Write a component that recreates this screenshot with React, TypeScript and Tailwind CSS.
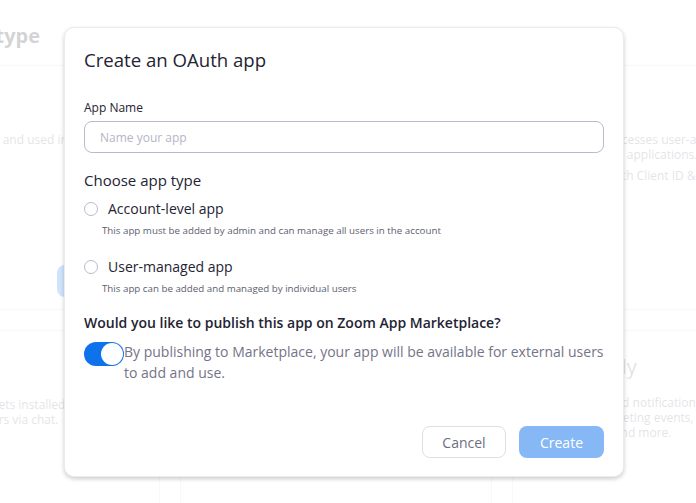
const Card = ({ children, className = "" }: { children?: React.ReactNode; className?: string }) => (
  <div className={`h-[245px] border border-[#dcdce3] rounded-[6px] relative ${className}`}>{children}</div>
);

const Radio = ({ label }: { label: string }) => (
  <label className="flex items-center h-5">
    <span className="w-[14px] h-[14px] rounded-full border border-[#babacc] bg-white" />
    <span className="ml-[10px] text-[14px] leading-5 text-[#232333]">{label}</span>
  </label>
);

export default function App() {
  return (
    <div className="relative w-[696px] h-[503px] overflow-hidden bg-white font-['Open_Sans',sans-serif]">
      {/* page behind the dialog */}
      <div className="-ml-[152px] w-[1000px]">
        <div className="h-[65px] pt-[22px]">
          <div className="w-[192px] flex justify-end">
            <h1 className="text-[20px] leading-[28px] font-bold text-[#232333] whitespace-nowrap">Choose app type</h1>
          </div>
        </div>
        <div className="grid grid-cols-[312px_312px_312px] gap-5">
          <Card>
            <p className="pt-[66px] pl-[29px] text-[12px] leading-[15px] text-[#747487] whitespace-nowrap">
              An app to be installed and used in the account
            </p>
            <button className="mt-[118px] ml-[208px] w-[120px] h-8 rounded-lg bg-[#0e72ed] text-white text-[14px]">
              Create
            </button>
          </Card>
          <Card />
          <Card>
            <div className="pt-[66px] pl-[22px] text-[12px] leading-[15px] text-[#747487] whitespace-nowrap">
              <p className="ml-[6px]">An app that accesses user-authorized data</p>
              <p className="ml-[18px]">for 3rd party applications.</p>
              <p className="mt-[6px]">Authenticate with Client ID &amp; Secret</p>
            </div>
          </Card>
          <Card>
            <div className="pt-[66px] pl-[36px] text-[12px] leading-[15px] text-[#747487] whitespace-nowrap">
              <p>A chatbot app that gets installed</p>
              <p className="ml-[6px]">to interact with users via chat.</p>
            </div>
          </Card>
          <Card />
          <Card>
            <div className="pt-[22px] pl-[24px] whitespace-nowrap">
              <p className="text-[20px] leading-[28px] text-[#747487]">Event Only</p>
              <div className="mt-[14px] text-[12px] leading-[15px] text-[#747487]">
                <p>Event hooks and notifications for</p>
                <p>updates for meeting events, webinar</p>
                <p className="ml-[6px]">user events, and more.</p>
              </div>
            </div>
          </Card>
        </div>
      </div>

      {/* dim layer */}
      <div className="absolute inset-0 bg-white/80" />

      {/* dialog */}
      <div className="absolute left-[64px] top-[27px] w-[560px] h-[450px] bg-white rounded-[10px] border border-[#ebebee] shadow-[0_2px_4px_rgba(0,0,0,0.2)] px-[19px] pt-[18px] pb-[18px] flex flex-col">
        <h2 className="text-[18.6px] leading-[27px] font-medium text-[#232333]">Create an OAuth app</h2>

        <label className="mt-[27px] text-[12px] leading-4 font-medium text-[#232333]">App Name</label>
        <input
          placeholder="Name your app"
          className="mt-[5px] h-8 w-full rounded-lg border border-[#babacc] px-[15px] text-[12px] text-[#232333] placeholder:text-[#b5b5c6] outline-none"
        />

        <h3 className="mt-[16px] text-[15px] leading-[22px] text-[#232333]">Choose app type</h3>
        <div className="mt-[8px]">
          <Radio label="Account-level app" />
          <p className="ml-[18px] mt-[5px] text-[9.75px] leading-[14px] text-[#5e5e70]">
            This app must be added by admin and can manage all users in the account
          </p>
        </div>
        <div className="mt-[19px]">
          <Radio label="User-managed app" />
          <p className="ml-[18px] mt-[5px] text-[9.75px] leading-[14px] text-[#5e5e70]">
            This app can be added and managed by individual users
          </p>
        </div>

        <h3 className="mt-[17px] text-[14px] leading-5 font-semibold text-[#232333]">
          Would you like to publish this app on Zoom App Marketplace?
        </h3>
        <div className="mt-[8px] flex items-start">
          <button className="relative mt-px w-10 h-6 shrink-0 rounded-full bg-[#0e72ed]">
            <span className="absolute right-px top-px w-[22px] h-[22px] rounded-full bg-white" />
          </button>
          <p className="text-[14px] leading-[21px] text-[#747487]">
            By publishing to Marketplace, your app will be available for external users to add and use.
          </p>
        </div>

        <div className="mt-auto flex justify-end gap-[13px]">
          <button className="w-[84px] h-8 rounded-lg border border-[#dcdfe6] bg-white text-[14px] text-[#6e6e80]">
            Cancel
          </button>
          <button className="w-[85px] h-8 rounded-lg bg-[#0e72ed]/50 text-[14px] text-white">Create</button>
        </div>
      </div>
    </div>
  );
}
